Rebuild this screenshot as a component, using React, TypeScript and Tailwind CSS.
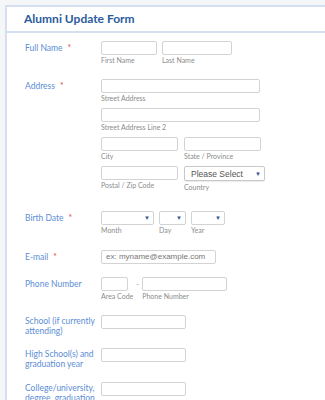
import React from "react";

const font = { fontFamily: "Lato, 'Open Sans', sans-serif" };

function Caret() {
  return <span className="absolute right-[3px] top-1/2 -translate-y-1/2 text-[6px] leading-none text-[#2d5a96]">▼</span>;
}

function Field({ w, sub, select, placeholder }: { w: string; sub?: string; select?: boolean; placeholder?: string }) {
  return (
    <div className="flex flex-col">
      <div className={`relative h-[14px] ${w} rounded-[2px] border border-[#d3d3d3] bg-white`}>
        {placeholder && <span className="absolute left-[4px] top-1/2 -translate-y-1/2 text-[8px] text-[#777]" style={{ fontFamily: "'Liberation Sans', sans-serif" }}>{placeholder}</span>}
        {select && <Caret />}
      </div>
      {sub && <span className="text-[7px] leading-[10px] text-[#8c8c8c]">{sub}</span>}
    </div>
  );
}

function Label({ text, req }: { text: React.ReactNode; req?: boolean }) {
  return (
    <div className="w-[76px] shrink-0 pr-[4px] text-[8.5px] leading-[14px] text-[#5b8ed4]">
      {text}
      {req && <span className="ml-[5px] text-[#e0474c]">*</span>}
    </div>
  );
}

function TallLabel({ text }: { text: string }) {
  return <div className="w-[76px] shrink-0 pr-[2px] pt-[1px] text-[8.5px] leading-[10px] text-[#5b8ed4]">{text}</div>;
}

export default function App() {
  return (
    <div className="h-[400px] w-[325px] overflow-hidden bg-[#f5f6f8] pl-[5px] pt-[5px]" style={font}>
      <div className="h-[420px] w-[340px] border-l-2 border-t-2 border-[#d4e0ef] bg-white">
        <div className="flex h-[26px] items-center border-b-2 border-[#d4e0ef] pl-[17px]">
          <h1 className="text-[12px] font-bold text-[#2c5b9c]">Alumni Update Form</h1>
        </div>
        <div className="pl-[18px]">
          <div className="mt-[8px] flex">
            <Label text="Full Name" req />
            <div className="flex gap-[5px]">
              <Field w="w-[56px]" sub="First Name" />
              <Field w="w-[70px]" sub="Last Name" />
            </div>
          </div>

          <div className="mt-[14px] flex">
            <Label text="Address" req />
            <div className="flex flex-col gap-[5px]">
              <Field w="w-[159px]" sub="Street Address" />
              <Field w="w-[159px]" sub="Street Address Line 2" />
              <div className="flex gap-[6px]">
                <Field w="w-[77px]" sub="City" />
                <Field w="w-[77px]" sub="State / Province" />
              </div>
              <div className="flex gap-[6px]">
                <Field w="w-[77px]" sub="Postal / Zip Code" />
                <div className="flex flex-col">
                  <div className="relative h-[15px] w-[81px] rounded-[2px] border border-[#c8c8c8] bg-white shadow-[0_1px_1px_rgba(0,0,0,0.08)]">
                    <span className="absolute left-[6px] top-1/2 -translate-y-1/2 text-[8.5px] text-[#555]" style={{ fontFamily: "'Liberation Sans', sans-serif" }}>Please Select</span>
                    <Caret />
                  </div>
                  <span className="mt-[1px] text-[7px] leading-[10px] text-[#8c8c8c]">Country</span>
                </div>
              </div>
            </div>
          </div>

          <div className="mt-[19px] flex">
            <Label text="Birth Date" req />
            <div className="flex gap-[5px]">
              <Field w="w-[53px]" sub="Month" select />
              <Field w="w-[27px]" sub="Day" select />
              <Field w="w-[34px]" sub="Year" select />
            </div>
          </div>

          <div className="mt-[15px] flex">
            <Label text="E-mail" req />
            <Field w="w-[115px]" placeholder="ex: myname@example.com" />
          </div>

          <div className="mt-[13px] flex">
            <Label text="Phone Number" />
            <div className="flex items-start gap-[3px]">
              <Field w="w-[27px]" sub="Area Code" />
              <span className="text-[8px] leading-[14px] text-[#999]">-</span>
              <Field w="w-[85px]" sub="Phone Number" />
            </div>
          </div>

          <div className="mt-[14px] flex">
            <TallLabel text="School (if currently attending)" />
            <Field w="w-[85px]" />
          </div>

          <div className="mt-[12px] flex">
            <TallLabel text="High School(s) and graduation year" />
            <Field w="w-[85px]" />
          </div>

          <div className="mt-[13px] flex">
            <TallLabel text="College/university, degree, graduation" />
            <Field w="w-[85px]" />
          </div>
        </div>
      </div>
    </div>
  );
}
